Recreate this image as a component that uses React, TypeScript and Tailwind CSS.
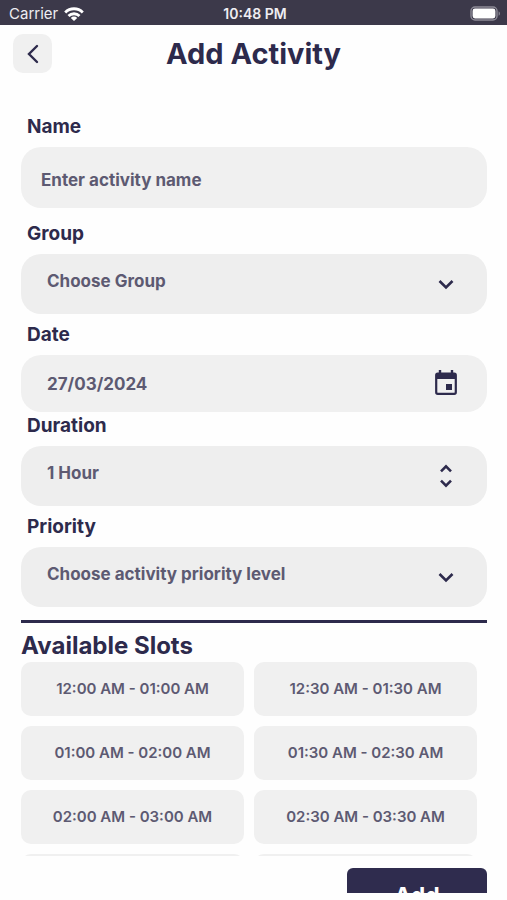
import { useState } from "react";
import type { ReactNode } from "react";

const slots = [
  "12:00 AM - 01:00 AM",
  "12:30 AM - 01:30 AM",
  "01:00 AM - 02:00 AM",
  "01:30 AM - 02:30 AM",
  "02:00 AM - 03:00 AM",
  "02:30 AM - 03:30 AM",
  "03:00 AM - 04:00 AM",
  "03:30 AM - 04:30 AM",
];

function StatusBar() {
  return (
    <div className="grid h-[25px] shrink-0 grid-cols-3 items-center bg-[#3c394a] pt-0.5 pr-1.5 pl-[9px] text-[15px] leading-5 text-[#eeedf2]">
      <div className="flex items-center gap-1.5">
        <span>Carrier</span>
        <svg width="20" height="14" viewBox="0 0 20 14" fill="none" stroke="#fff" strokeWidth="2.8" aria-hidden="true">
          <path d="M1.2 5.4a12.4 12.4 0 0 1 17.6 0" />
          <path d="M4.5 9a7.8 7.8 0 0 1 11 0" />
          <path d="M10 14 6.800 10.900a4.400 4.400 0 0 1 6.400 0Z" fill="#fff" stroke="none" />
        </svg>
      </div>
      <span className="text-center text-sm leading-5 font-semibold">10:48 PM</span>
      <svg className="justify-self-end" width="31" height="15" viewBox="0 0 31 15" aria-hidden="true">
        <rect x="1" y="1" width="26" height="13" rx="4" fill="none" stroke="#8d8b97" strokeWidth="1.400" />
        <rect x="2.600" y="2.600" width="22.800" height="9.800" rx="2.400" fill="#fff" />
        <path d="M28.600 5.200c1.800.8 1.800 3.800 0 4.600Z" fill="#8d8b97" />
      </svg>
    </div>
  );
}

function Field({ id, label, className, children }: { id: string; label: string; className?: string; children: ReactNode }) {
  return (
    <div className={className}>
      <label htmlFor={id} className="mb-1.5 block px-1.5 text-[19px] leading-7 font-bold text-[#2d2a4c]">
        {label}
      </label>
      {children}
    </div>
  );
}

function Chevron() {
  return (
    <svg width="24" height="24" viewBox="0 0 24 24" fill="none" stroke="#2d2a4c" strokeWidth="2.600" aria-hidden="true">
      <path d="m5.500 9 6.500 6.500L18.500 9" />
    </svg>
  );
}

function UpDown() {
  return (
    <svg width="24" height="24" viewBox="0 0 24 24" fill="none" stroke="#2d2a4c" strokeWidth="2.600" aria-hidden="true">
      <path d="m7 7.400 5-5 5 5M7 16.600l5 5 5-5" />
    </svg>
  );
}

function CalendarIcon() {
  return (
    <svg className="mb-0.5" width="24" height="26" viewBox="0 0 24 26" fill="none" aria-hidden="true">
      <path d="M6 0v5M18 0v5" stroke="#2d2a4c" strokeWidth="2.400" />
      <rect x="2.200" y="3.700" width="19.600" height="20.100" rx="1.500" stroke="#2d2a4c" strokeWidth="2.200" />
      <path d="M2 4h20v5H2z" fill="#2d2a4c" />
      <path d="M12 14h6v6h-6z" fill="#2d2a4c" />
    </svg>
  );
}

function Picker({ id, options, icon }: { id: string; options: string[]; icon: ReactNode }) {
  return (
    <div className="grid items-center rounded-[20px] bg-[#eeeeee]">
      <select
        id={id}
        className="col-start-1 row-start-1 h-[60px] w-full appearance-none rounded-[20px] bg-transparent pr-16 pb-1 pl-[26px] font-bold text-[#5d5a72]"
      >
        {options.map((o) => (
          <option key={o}>{o}</option>
        ))}
      </select>
      <span className="pointer-events-none col-start-1 row-start-1 mr-[29px] justify-self-end">{icon}</span>
    </div>
  );
}

export default function App() {
  const [selected, setSelected] = useState<string | null>(null);

  return (
    <div className="flex h-screen flex-col overflow-hidden bg-[#fefefe] font-['Inter',sans-serif] text-[17px] [font-optical-sizing:none]">
      <StatusBar />

      <header className="grid shrink-0 grid-cols-[39px_1fr_39px] items-center px-[13px] pt-[9px]">
        <button aria-label="Back" className="flex size-[39px] items-center justify-center rounded-[10px] bg-[#f0f0f0]">
          <svg width="24" height="24" viewBox="0 0 24 24" fill="none" stroke="#2d2a4c" strokeWidth="2.400" strokeLinecap="round" aria-hidden="true">
            <path d="m16 4-8 8 8 8" />
          </svg>
        </button>
        <h1 className="text-center text-[29px] leading-9 font-bold text-[#2d2a4c]">Add Activity</h1>
      </header>

      <main className="flex min-h-0 flex-1 flex-col pt-10 pr-5 pl-[21px]">
        <form className="shrink-0" onSubmit={(e) => e.preventDefault()}>
          <Field id="name" label="Name">
            <input
              id="name"
              type="text"
              placeholder="Enter activity name"
              className="block h-[61px] w-full rounded-[20px] bg-[#f0f0f0] px-5 pt-1 font-bold text-[#5d5a72] placeholder:text-[#5d5a72]"
            />
          </Field>
          <Field id="group" label="Group" className="mt-3">
            <Picker id="group" options={["Choose Group"]} icon={<Chevron />} />
          </Field>
          <Field id="date" label="Date" className="mt-[7px]">
            <div className="flex items-center rounded-[20px] bg-[#f0f0f0] pr-[29px]">
              <input
                id="date"
                type="text"
                defaultValue="27/03/2024"
                className="h-[57px] min-w-0 flex-1 bg-transparent pl-[26px] font-bold text-[#5d5a72]"
              />
              <CalendarIcon />
            </div>
          </Field>
          <Field id="duration" label="Duration">
            <Picker id="duration" options={["1 Hour", "2 Hours"]} icon={<UpDown />} />
          </Field>
          <Field id="priority" label="Priority" className="mt-[7px]">
            <Picker id="priority" options={["Choose activity priority level"]} icon={<Chevron />} />
          </Field>
        </form>

        <hr className="mt-[13px] shrink-0 border-t-[3px] border-[#2d2a4c]" />

        <h2 className="mt-[7px] shrink-0 text-2xl leading-8 font-bold text-[#2d2a4c]">Available Slots</h2>

        <div className="grid min-h-0 flex-1 auto-rows-[54px] grid-cols-2 gap-2.5 overflow-y-auto pr-2.5 [scrollbar-width:none]">
          {slots.map((slot) => (
            <button
              key={slot}
              aria-pressed={selected === slot}
              onClick={() => setSelected(slot)}
              className="rounded-[10px] bg-[#f0f0f0] text-[15px] font-semibold text-[#5d5a72] aria-pressed:bg-[#dddce6]"
            >
              {slot}
            </button>
          ))}
        </div>
      </main>

      <footer className="shrink-0 px-5 pt-3 pb-[7px]">
        <div className="flex h-[25px] justify-end overflow-hidden">
          <button className="h-14 w-[140px] rounded-md bg-[#2f2c4e] text-[23px] font-bold text-white">Add</button>
        </div>
      </footer>
    </div>
  );
}
